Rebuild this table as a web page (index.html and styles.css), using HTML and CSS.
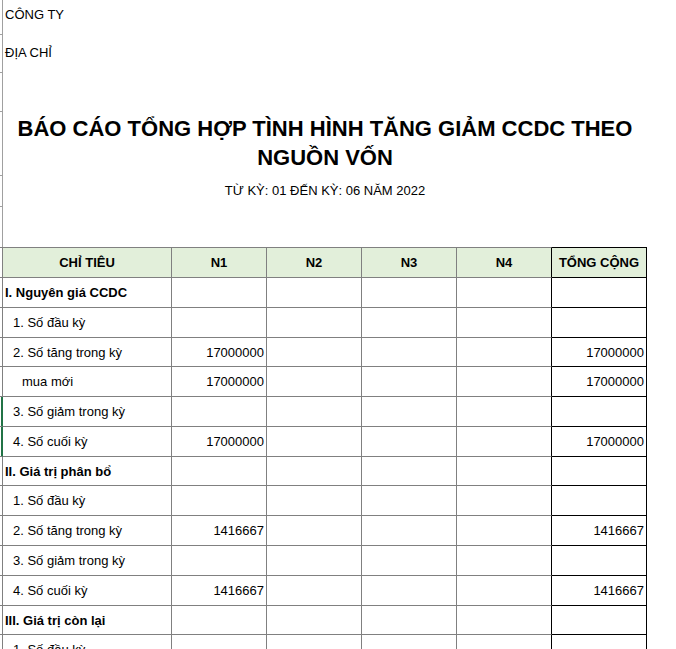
FILE: index.html
```html
<!DOCTYPE html>
<html lang="vi">
<head>
<meta charset="utf-8">
<title>Báo cáo tổng hợp tình hình tăng giảm CCDC theo nguồn vốn</title>
<link rel="stylesheet" href="styles.css">
</head>
<body>
<div class="top">
  <div class="gutter">
    <div class="tick t1"></div>
    <div class="tick t2"></div>
    <div class="tick t3"></div>
    <div class="tick t4"></div>
    <div class="tick t5"></div>
  </div>
  <div class="head">
    <div class="company">CÔNG TY</div>
    <div class="address">ĐỊA CHỈ</div>
    <h1 class="title">BÁO CÁO TỔNG HỢP TÌNH HÌNH TĂNG GIẢM CCDC THEO<br>NGUỒN VỐN</h1>
    <div class="period">TỪ KỲ: 01 ĐẾN KỲ: 06 NĂM 2022</div>
  </div>
</div>
<table class="report">
  <thead>
    <tr class="hrow">
      <th class="g"></th>
      <th class="c1">CHỈ TIÊU</th>
      <th class="cn">N1</th>
      <th class="cn">N2</th>
      <th class="cn">N3</th>
      <th class="cn n4">N4</th>
      <th class="cn tot">TỔNG CỘNG</th>
    </tr>
  </thead>
  <tbody>
    <tr class="r30"><td class="g"></td><td class="lbl sec">I. Nguyên giá CCDC</td><td class="num"></td><td></td><td></td><td class="n4"></td><td class="num tot"></td></tr>
    <tr class="r30"><td class="g"></td><td class="lbl sub">1. Số đầu kỳ</td><td class="num"></td><td></td><td></td><td class="n4"></td><td class="num tot"></td></tr>
    <tr class="r29"><td class="g"></td><td class="lbl sub">2. Số tăng trong kỳ</td><td class="num">17000000</td><td></td><td></td><td class="n4"></td><td class="num tot">17000000</td></tr>
    <tr class="r30"><td class="g"></td><td class="lbl sub2">mua mới</td><td class="num">17000000</td><td></td><td></td><td class="n4"></td><td class="num tot">17000000</td></tr>
    <tr class="r30"><td class="g sel"></td><td class="lbl sub">3. Số giảm trong kỳ</td><td class="num"></td><td></td><td></td><td class="n4"></td><td class="num tot"></td></tr>
    <tr class="r30"><td class="g sel"></td><td class="lbl sub">4. Số cuối kỳ</td><td class="num">17000000</td><td></td><td></td><td class="n4"></td><td class="num tot">17000000</td></tr>
    <tr class="r29"><td class="g"></td><td class="lbl sec">II. Giá trị phân bổ</td><td class="num"></td><td></td><td></td><td class="n4"></td><td class="num tot"></td></tr>
    <tr class="r30"><td class="g"></td><td class="lbl sub">1. Số đầu kỳ</td><td class="num"></td><td></td><td></td><td class="n4"></td><td class="num tot"></td></tr>
    <tr class="r30"><td class="g"></td><td class="lbl sub">2. Số tăng trong kỳ</td><td class="num">1416667</td><td></td><td></td><td class="n4"></td><td class="num tot">1416667</td></tr>
    <tr class="r30"><td class="g"></td><td class="lbl sub">3. Số giảm trong kỳ</td><td class="num"></td><td></td><td></td><td class="n4"></td><td class="num tot"></td></tr>
    <tr class="r30"><td class="g"></td><td class="lbl sub">4. Số cuối kỳ</td><td class="num">1416667</td><td></td><td></td><td class="n4"></td><td class="num tot">1416667</td></tr>
    <tr class="r29"><td class="g"></td><td class="lbl sec">III. Giá trị còn lại</td><td class="num"></td><td></td><td></td><td class="n4"></td><td class="num tot"></td></tr>
    <tr class="r30"><td class="g"></td><td class="lbl sub">1. Số đầu kỳ</td><td class="num"></td><td></td><td></td><td class="n4"></td><td class="num tot"></td></tr>
  </tbody>
</table>
</body>
</html>
```

FILE: styles.css
```css
* {
  box-sizing: border-box;
}

html, body {
  margin: 0;
  padding: 0;
  background: #ffffff;
}

body {
  font-family: "Liberation Sans", Arial, sans-serif;
  font-size: 13px;
  color: #000000;
  overflow: hidden;
}

/* ---------- top area ---------- */
.top {
  display: flex;
  height: 247px;
}

.gutter {
  width: 3px;
  flex: none;
  border-right: 1px solid #a0a0a0;
}

.tick {
  border-bottom: 1px solid #a0a0a0;
}

.t1 { height: 35px; }
.t2 { height: 38px; }
.t3 { height: 39px; }
.t4 { height: 64px; }
.t5 { height: 31px; }

.head {
  width: 644px;
  flex: none;
}

.company {
  line-height: 17px;
  margin-top: 6px;
  padding-left: 2px;
}

.address {
  line-height: 17px;
  margin-top: 21px;
  padding-left: 2px;
}

.title {
  margin: 54px 0 0;
  font-size: 22px;
  font-weight: bold;
  line-height: 28.5px;
  text-align: center;
}

.period {
  margin-top: 10px;
  line-height: 17px;
  text-align: center;
}

/* ---------- table ---------- */
.report {
  border-collapse: separate;
  border-spacing: 0;
  table-layout: fixed;
  width: 647px;
}

.report th,
.report td {
  padding: 0 2px;
  border-right: 1px solid #808080;
  border-bottom: 1px solid #808080;
  vertical-align: middle;
  white-space: nowrap;
  overflow: hidden;
}

.report th {
  background: #e2efda;
  font-weight: bold;
  text-align: center;
  border-top: 1px solid #808080;
  height: 31px;
}

.report .g {
  width: 3px;
  padding: 0;
  background: #ffffff;
}

.report .c1 { width: 169px; }
.report .cn { width: 95px; }

.r30 td { height: 30px; }
.r29 td { height: 29px; }

.report .g.sel {
  border-right-color: #217346;
  box-shadow: inset -1px 0 0 #217346;
}

.lbl {
  text-align: left;
}

.sec {
  font-weight: bold;
}

.sub {
  padding-left: 10px !important;
}

.sub2 {
  padding-left: 19px !important;
}

.num {
  text-align: right;
}

.report .n4 {
  border-right-color: #000000;
}

.report .tot {
  border-right-color: #000000;
  border-bottom-color: #000000;
}

.report th.tot {
  border-top-color: #000000;
}
```
